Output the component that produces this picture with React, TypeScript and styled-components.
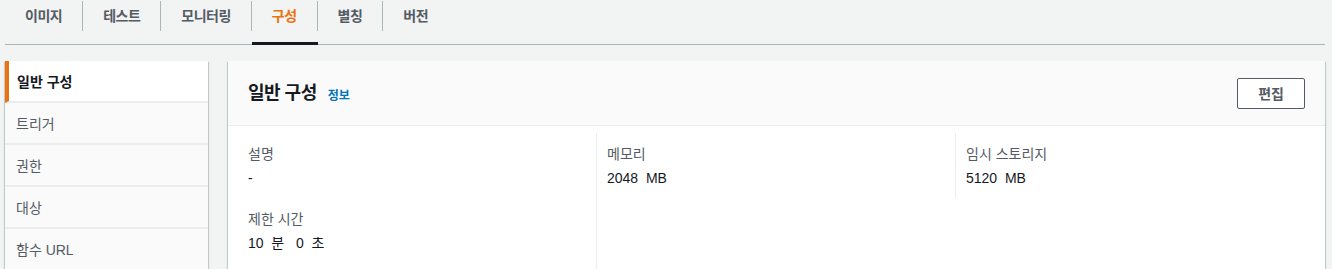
import { FC } from "react";
import styled, { createGlobalStyle, css } from "styled-components";

const GlobalStyle = createGlobalStyle`
    html, body {
        margin: 0;
        padding: 0;
        background: #f2f3f3;
    }
    body {
        font-family: "Liberation Sans", "Noto Sans CJK KR", sans-serif;
        font-size: 14px;
        color: #16191f;
    }
    * {
        box-sizing: border-box;
    }
`;

const Page = styled.div`
    padding: 0 7px 0 5px;
`;

const TabList = styled.div`
    display: flex;
    align-items: flex-start;
    height: 45px;
    border-bottom: 1px solid #aab7b8;
`;

const Tab = styled.button<{ $active?: boolean }>`
    position: relative;
    display: flex;
    align-items: flex-start;
    height: 44px;
    padding: 1px 0 0;
    border: 0;
    background: none;
    font: inherit;
    cursor: pointer;

    &:not(:last-child) > span {
        border-right: 1px solid #aab7b8;
    }

    ${(p) =>
        p.$active &&
        css`
            &::after {
                content: "";
                position: absolute;
                left: 0;
                right: 0;
                bottom: -1px;
                height: 3px;
                background: #16191f;
            }
        `}
`;

const TabLabel = styled.span<{ $active?: boolean }>`
    display: block;
    height: 30px;
    line-height: 30px;
    padding: 0 20px;
    font-size: 14px;
    font-weight: 700;
    letter-spacing: -0.5px;
    color: ${(p) => (p.$active ? "#ec7211" : "#545b64")};
`;

const Content = styled.div`
    display: flex;
    align-items: flex-start;
    gap: 20px;
    margin-top: 16px;
`;

const Sidebar = styled.nav`
    width: 203px;
    flex-shrink: 0;
    background: #fafafa;
    box-shadow: 0 1px 1px 0 rgba(0, 28, 36, 0.3), 1px 1px 1px 0 rgba(0, 28, 36, 0.15),
        -1px 1px 1px 0 rgba(0, 28, 36, 0.15);
`;

const NavItem = styled.div<{ $active?: boolean }>`
    display: flex;
    align-items: center;
    height: 42px;
    padding: 0 0 1px 11px;
    border-bottom: 2px solid #eaeded;
    font-size: 14px;
    color: #545b64;

    ${(p) =>
        p.$active &&
        css`
            background: #ffffff;
            border-left: 4px solid #ec7211;
            padding-left: 8px;
            font-weight: 700;
            color: #16191f;
        `}
`;

const Panel = styled.section`
    flex: 1;
    background: #ffffff;
    box-shadow: 0 1px 1px 0 rgba(0, 28, 36, 0.3), 1px 1px 1px 0 rgba(0, 28, 36, 0.15),
        -1px 1px 1px 0 rgba(0, 28, 36, 0.15);
`;

const PanelHeader = styled.header`
    display: flex;
    align-items: center;
    justify-content: space-between;
    height: 65px;
    padding: 0 20px;
    background: #fafafa;
    border-bottom: 1px solid #eaeded;
`;

const TitleRow = styled.div`
    display: flex;
    align-items: center;
    gap: 11px;
`;

const Title = styled.h2`
    margin: 0;
    font-size: 18px;
    line-height: 22px;
    font-weight: 700;
    letter-spacing: -0.5px;
    color: #16191f;
`;

const InfoLink = styled.a`
    font-size: 12px;
    font-weight: 700;
    color: #0073bb;
    text-decoration: none;
    margin-top: 2px;
`;

const EditButton = styled.button`
    height: 31px;
    padding: 0 20px;
    background: #ffffff;
    border: 1px solid #545b64;
    border-radius: 2px;
    font: inherit;
    font-size: 14px;
    font-weight: 700;
    color: #545b64;
    cursor: pointer;
`;

const Grid = styled.div`
    display: grid;
    grid-template-columns: 348fr 359fr 350fr;
    padding: 7px 20px 0;
`;

const Cell = styled.div<{ $divider?: boolean; $last?: boolean }>`
    padding: 10px 0 ${(p) => (p.$last ? "20px" : "9px")};
    ${(p) =>
        p.$divider &&
        css`
            border-left: 1px solid #eaeded;
            padding-left: 10px;
        `}
`;

const Label = styled.div`
    font-size: 14px;
    line-height: 22px;
    color: #545b64;
`;

const Value = styled.div`
    margin-top: 2px;
    font-size: 14px;
    line-height: 22px;
    color: #16191f;
    white-space: pre;
`;

const tabs = ["이미지", "테스트", "모니터링", "구성", "별칭", "버전"];
const navItems = ["일반 구성", "트리거", "권한", "대상", "함수 URL"];

const App: FC = () => {
    return (
        <Page>
            <GlobalStyle />
            <TabList>
                {tabs.map((t) => (
                    <Tab key={t} $active={t === "구성"}>
                        <TabLabel $active={t === "구성"}>{t}</TabLabel>
                    </Tab>
                ))}
            </TabList>
            <Content>
                <Sidebar>
                    {navItems.map((n, i) => (
                        <NavItem key={n} $active={i === 0}>
                            {n}
                        </NavItem>
                    ))}
                </Sidebar>
                <Panel>
                    <PanelHeader>
                        <TitleRow>
                            <Title>일반 구성</Title>
                            <InfoLink href="#">정보</InfoLink>
                        </TitleRow>
                        <EditButton>편집</EditButton>
                    </PanelHeader>
                    <Grid>
                        <Cell>
                            <Label>설명</Label>
                            <Value>-</Value>
                        </Cell>
                        <Cell $divider>
                            <Label>메모리</Label>
                            <Value>{"2048  MB"}</Value>
                        </Cell>
                        <Cell $divider>
                            <Label>임시 스토리지</Label>
                            <Value>{"5120  MB"}</Value>
                        </Cell>
                        <Cell $last>
                            <Label>제한 시간</Label>
                            <Value>{"10  분   0  초"}</Value>
                        </Cell>
                        <Cell $divider $last />
                        <Cell $last />
                    </Grid>
                </Panel>
            </Content>
        </Page>
    );
};

export default App;
